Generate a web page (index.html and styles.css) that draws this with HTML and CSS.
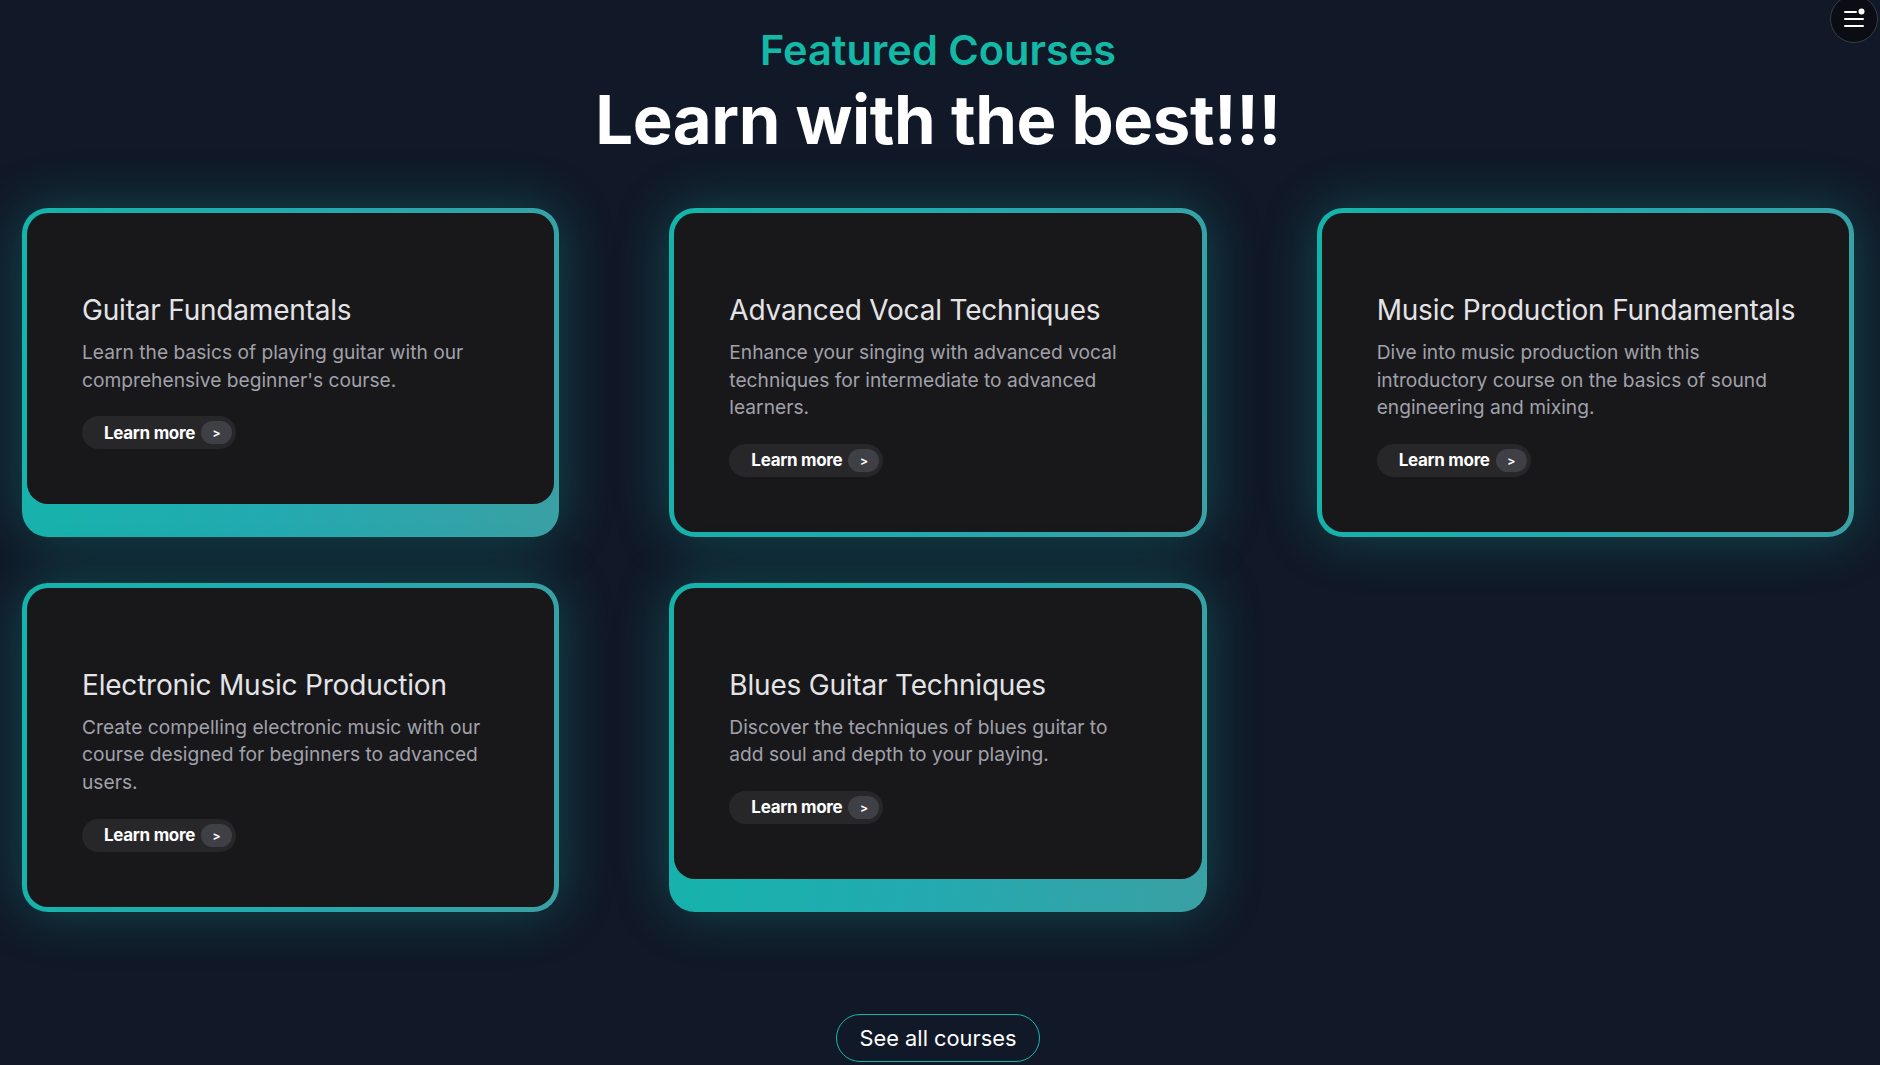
FILE: index.html
```html
<!DOCTYPE html>
<html lang="en">
<head>
<meta charset="utf-8">
<title>Featured Courses</title>
<link rel="stylesheet" href="styles.css">
</head>
<body>
<button class="menu-btn" aria-label="Menu">
  <svg viewBox="0 0 24 24" width="24" height="24" fill="none" stroke="#fff" stroke-width="2" stroke-linecap="round">
    <line x1="3" y1="5" x2="14" y2="5"/>
    <line x1="3" y1="12" x2="21" y2="12"/>
    <line x1="3" y1="19" x2="21" y2="19"/>
    <circle cx="19.5" cy="4.5" r="3" fill="#fff" stroke="none"/>
  </svg>
</button>
<main class="section">
  <header class="head">
    <p class="eyebrow">Featured Courses</p>
    <h1 class="title">Learn with the best!!!</h1>
  </header>
  <div class="grid">
    <article class="card">
      <div class="card-body">
        <h2 class="card-title">Guitar Fundamentals</h2>
        <p class="card-text">Learn the basics of playing guitar with our comprehensive beginner's course.</p>
        <a class="learn" href="#">Learn more <span class="arrow">&gt;</span></a>
      </div>
    </article>
    <article class="card">
      <div class="card-body">
        <h2 class="card-title">Advanced Vocal Techniques</h2>
        <p class="card-text">Enhance your singing with advanced vocal techniques for intermediate to advanced learners.</p>
        <a class="learn" href="#">Learn more <span class="arrow">&gt;</span></a>
      </div>
    </article>
    <article class="card">
      <div class="card-body">
        <h2 class="card-title">Music Production Fundamentals</h2>
        <p class="card-text">Dive into music production with this introductory course on the basics of sound engineering and mixing.</p>
        <a class="learn" href="#">Learn more <span class="arrow">&gt;</span></a>
      </div>
    </article>
    <article class="card">
      <div class="card-body">
        <h2 class="card-title">Electronic Music Production</h2>
        <p class="card-text">Create compelling electronic music with our course designed for beginners to advanced users.</p>
        <a class="learn" href="#">Learn more <span class="arrow">&gt;</span></a>
      </div>
    </article>
    <article class="card">
      <div class="card-body">
        <h2 class="card-title">Blues Guitar Techniques</h2>
        <p class="card-text">Discover the techniques of blues guitar to add soul and depth to your playing.</p>
        <a class="learn" href="#">Learn more <span class="arrow">&gt;</span></a>
      </div>
    </article>
  </div>
  <div class="more">
    <a class="see-all" href="#">See all courses</a>
  </div>
</main>
</body>
</html>
```

FILE: styles.css
```css
* { box-sizing: border-box; }

html, body {
  margin: 0;
  padding: 0;
  background: #111827;
  height: 100%;
  overflow: hidden;
}

body {
  font-family: Inter, "Noto Sans", sans-serif;
  color: #fff;
}

.menu-btn {
  position: absolute;
  top: -5px;
  right: 2px;
  width: 48px;
  height: 48px;
  border-radius: 50%;
  background: #0a0d14;
  border: 1.5px solid #3a3d44;
  display: flex;
  align-items: center;
  justify-content: center;
  padding: 0;
}

.section {
  padding: 27px 26px 0 22px;
}

.head {
  text-align: center;
}

.eyebrow {
  margin: 0;
  color: #14b8a6;
  font-size: 41.5px;
  font-weight: 600;
  line-height: 46px;
}

.title {
  margin: 11px 0 0;
  font-size: 67px;
  font-weight: 700;
  line-height: 72px;
  letter-spacing: -0.4px;
  color: #fff;
}

.grid {
  margin-top: 52px;
  display: grid;
  grid-template-columns: repeat(3, 1fr);
  column-gap: 110px;
  row-gap: 46px;
}

.card {
  display: flex;
  flex-direction: column;
  align-items: stretch;
  justify-content: flex-start;
  padding: 5px;
  border-radius: 26px;
  background: linear-gradient(100deg, #14b4aa 0%, #22aab0 50%, #3aa0a4 100%);
  box-shadow: 0 0 55px rgba(20, 184, 166, 0.32);
}

.card-body {
  background: #18181b;
  border-radius: 21px;
  padding: 80px 39px 55px 55px;
}

.card-title {
  margin: 0;
  font-size: 28px;
  font-weight: 400;
  line-height: 34px;
  color: #e4e4e7;
  letter-spacing: -0.2px;
  white-space: nowrap;
}

.card-text {
  margin: 12px 16px 0 0;
  font-size: 19.2px;
  line-height: 27.6px;
  color: #a1a1aa;
}

.learn {
  margin-top: 22px;
  display: inline-flex;
  align-items: center;
  gap: 6px;
  height: 33px;
  padding: 0 4px 0 22px;
  border-radius: 999px;
  background: #27272a;
  color: #fff;
  font-size: 17px;
  font-weight: 700;
  letter-spacing: -0.3px;
  text-decoration: none;
}

.arrow {
  display: inline-flex;
  align-items: center;
  justify-content: center;
  width: 31px;
  height: 23px;
  border-radius: 999px;
  background: #3f3f46;
  font-size: 12px;
  font-weight: 700;
}

.more {
  display: flex;
  justify-content: center;
  margin-top: 102px;
}

.see-all {
  display: inline-flex;
  align-items: center;
  height: 48px;
  padding: 0 23px;
  border: 1.5px solid #14b8a6;
  border-radius: 999px;
  color: #fff;
  font-size: 21.8px;
  text-decoration: none;
}
```
